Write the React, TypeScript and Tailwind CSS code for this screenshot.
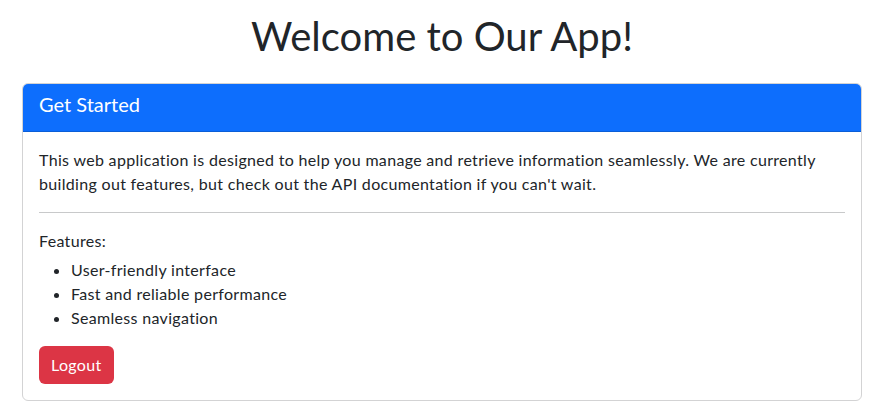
export default function App() {
  const features = ['User-friendly interface', 'Fast and reliable performance', 'Seamless navigation'];

  return (
    <div className="min-h-screen bg-white pl-[22px] pr-[18px] pt-[12px] text-[#212529] font-['Lato','Liberation_Sans',sans-serif]">
      <h1 className="text-center text-[40px] leading-[48px] font-normal mb-[23px]">Welcome to Our App!</h1>

      <div className="border border-[#d3d3d4] rounded-[6px] overflow-hidden">
        <div className="bg-[#0d6efd] text-white px-4 pt-2 pb-[15px] border-b border-[#0b5ed7]">
          <h5 className="text-[20px] leading-[24px] font-normal">Get Started</h5>
        </div>

        <div className="p-4 text-[16px] leading-[24px] tracking-[0.02em]">
          <p className="mb-4">
            This web application is designed to help you manage and retrieve information seamlessly. We are currently
            building out features, but check out the API documentation if you can't wait.
          </p>
          <hr className="border-t border-[#c8c9ca] my-4" />
          <p className="mb-[5px]">Features:</p>
          <ul className="list-disc pl-8 mb-4">
            {features.map((f) => (
              <li key={f}>{f}</li>
            ))}
          </ul>
          <button className="bg-[#dc3545] text-white rounded-[6px] px-3 py-[7px] leading-[24px] text-[16px]">
            Logout
          </button>
        </div>
      </div>
    </div>
  );
}
